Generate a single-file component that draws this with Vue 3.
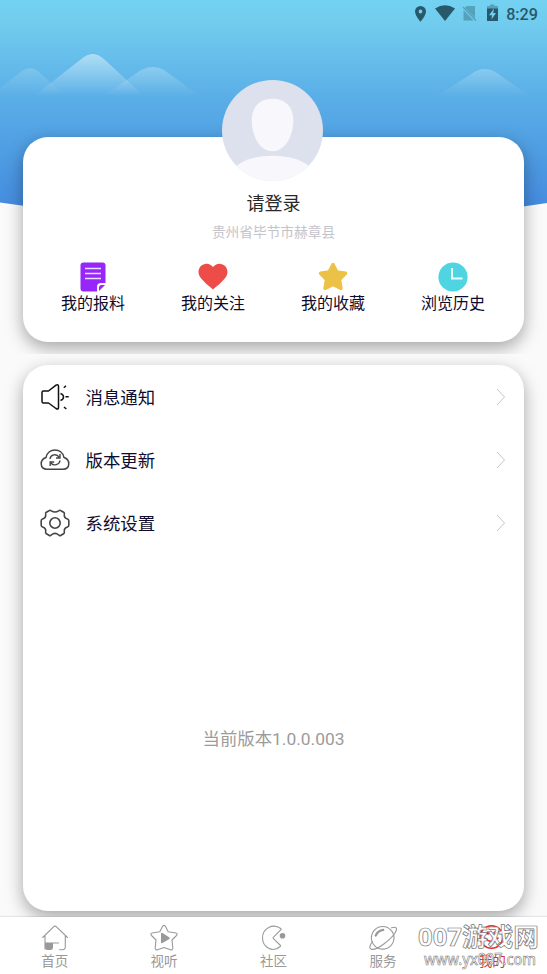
<script setup>
const actions = [
  { label: '我的报料', icon: 'note' },
  { label: '我的关注', icon: 'heart' },
  { label: '我的收藏', icon: 'star' },
  { label: '浏览历史', icon: 'clock' },
]
const settings = [
  { label: '消息通知', icon: 'speaker' },
  { label: '版本更新', icon: 'cloud' },
  { label: '系统设置', icon: 'gear' },
]
const tabs = [
  { label: '首页', icon: 'home' },
  { label: '视听', icon: 'media' },
  { label: '社区', icon: 'community' },
  { label: '服务', icon: 'planet' },
  { label: '我的', icon: 'user', active: true },
]
</script>

<template>
  <div class="page">
    <svg class="backdrop" viewBox="0 0 547 216" preserveAspectRatio="none">
      <defs>
        <linearGradient id="sky" x1="0" y1="0" x2="0" y2="1">
          <stop offset="0" stop-color="#73d2f1" />
          <stop offset=".1" stop-color="#71ccee" />
          <stop offset=".44" stop-color="#5aaee7" />
          <stop offset=".65" stop-color="#509fe3" />
          <stop offset="1" stop-color="#4286de" />
        </linearGradient>
        <linearGradient id="peak" gradientUnits="userSpaceOnUse" x1="0" y1="54" x2="0" y2="96">
          <stop offset="0" stop-color="#fff" stop-opacity=".47" />
          <stop offset="1" stop-color="#fff" stop-opacity="0" />
        </linearGradient>
        <linearGradient id="hill" gradientUnits="userSpaceOnUse" x1="0" y1="67" x2="0" y2="96">
          <stop offset="0" stop-color="#fff" stop-opacity=".26" />
          <stop offset="1" stop-color="#fff" stop-opacity="0" />
        </linearGradient>
      </defs>
      <path d="M0 0H547V203Q273.500 245 0 202.500Z" fill="url(#sky)" />
      <path d="M0 88L22 71Q30 65 38 71L66 96H0Z" fill="url(#hill)" opacity=".65" />
      <path d="M33 97L80 60Q93 48 105 60L145 97Z" fill="url(#peak)" />
      <path d="M103 96L141 70Q153 64 164 70L200 96Z" fill="url(#hill)" />
      <path d="M435 97L476 71Q484 67 494 71L531 97Z" fill="url(#hill)" />
    </svg>

    <header class="status">
      <svg width="120" height="28" viewBox="412 0 120 28" class="status-icons">
        <path fill-rule="evenodd" d="M420.500 6a5.500 5.500 0 0 0-5.500 5.500c0 4 5.500 10.300 5.500 10.300s5.500-6.300 5.500-10.300A5.500 5.500 0 0 0 420.500 6Zm0 3.600a1.900 1.900 0 1 1 0 3.800a1.900 1.900 0 0 1 0-3.800Z" />
        <path d="M435 8.600Q445 2 455 8.600L445 21Z" />
        <path opacity=".38" d="M467 6H475V18L465 7.800ZM463.500 10L473.500 20.500H463.500ZM462.500 7.500L463.500 6.500L476.500 20L475.500 21Z" />
        <path opacity=".4" d="M487 7V6H490V4.500H494.500V6H498V9H487Z" />
        <path fill-rule="evenodd" d="M487 8.500H498V21H487ZM494 8.500L489 15.300H492L491.500 19.500L496 13H493.200Z" />
      </svg>
      <span class="time">8:29</span>
    </header>

    <section class="profile-wrap">
      <div class="card profile">
        <svg class="avatar" viewBox="0 0 102 102">
          <defs><clipPath id="face"><circle cx="51" cy="51" r="51" /></clipPath></defs>
          <g clip-path="url(#face)">
            <rect width="102" height="102" fill="#dde1ed" />
            <path d="M51 19C38 19 30 27 30 41C30 56 38 72 51 72S72 56 72 41C72 27 64 19 51 19Z" fill="#f8f8fc" />
            <path d="M10 91Q23 76.500 51 76.500T92 91V103H10Z" fill="#f8f8fc" />
          </g>
        </svg>
        <h1>请登录</h1>
        <p class="region">贵州省毕节市赫章县</p>
        <nav class="actions">
          <a v-for="item in actions" :key="item.label" class="action">
            <svg width="30" height="30" viewBox="0 0 30 30">
              <g v-if="item.icon === 'note'">
                <path d="M5.500 .5H24.500Q27.500 .5 27.500 3.500V21H23Q19 21 19 25V29.500H5.500Q2.500 29.500 2.500 26.500V3.500Q2.500 .5 5.500 .5Z" fill="#9626f9" />
                <path d="M21 29V25.500Q21 23 23.500 23H27Z" fill="#9626f9" />
                <path d="M7 6.500H23M7 11.500H23M7 16.500H23" stroke="#f1dfff" stroke-width="1.300" />
              </g>
              <path v-else-if="item.icon === 'heart'" d="M15 27.500C11 24 4 18.500 1.500 14C-1 9 1.500 3 7 2C10.500 1.300 13 3 15 5C17 3 19.500 1.300 23 2C28.500 3 31 9 28.500 14C26 18.500 19 24 15 27.500Z" fill="#ee4c49" />
              <path v-else-if="item.icon === 'star'" d="M15 2.500L19 10L27.500 11.300L21.500 17.600L23 26.500L15 22.500L7 26.500L8.500 17.600L2.500 11.300L11 10Z" fill="#ecc147" stroke="#ecc147" stroke-width="3.400" stroke-linejoin="round" />
              <g v-else>
                <circle cx="15" cy="15" r="14.600" fill="#4fd5e1" />
                <path d="M14 6V16.500H24.500" fill="none" stroke="#e9fdff" stroke-width="2" />
              </g>
            </svg>
            <span>{{ item.label }}</span>
          </a>
        </nav>
      </div>
    </section>

    <main class="settings-wrap">
      <div class="card settings">
        <div v-for="item in settings" :key="item.label" class="row">
          <svg class="row-icon" width="30" height="30" viewBox="0 0 30 30">
            <g v-if="item.icon === 'speaker'" stroke="#111" stroke-width="1.500" stroke-linejoin="round">
              <path d="M3.500 9H8.500L16 3.200Q18.500 1.800 18.500 4.500V25.500Q18.500 28 16 26.500L8.500 21H3.500Q2 21 2 19.500V10.500Q2 9 3.500 9Z" />
              <path d="M20.500 11.500Q23.500 12.500 23.500 15T20.500 18.500M25.500 14.700H28.700M23.800 5.700L26 3.800M24 25L26.300 27" />
            </g>
            <g v-else-if="item.icon === 'cloud'" stroke="#444" stroke-width="1.500">
              <path d="M7 24.200C-.5 24.200-.5 14.500 6 12.500C8 2.500 22 2.500 24 12.500C30.500 14.500 30.500 24.200 23 24.200Z" />
              <path d="M10 14C10.500 9.500 16.500 8.300 19 12M20 9V13H16M20 15.500C19.500 20 13.500 21.300 11 18M10.200 21V17H14.200" stroke-width="1.400" />
            </g>
            <g v-else stroke="#444" stroke-width="1.600" stroke-linejoin="round">
              <path d="M9 2.700Q10.200 1.800 11.300 2.800Q15 5.200 18.700 2.800Q19.800 1.800 21 2.700L23.600 4.200Q24.800 5 24.300 6.400Q23.800 9.900 27.500 11Q28.800 11.400 28.800 12.700V17.300Q28.800 18.600 27.500 19Q23.800 20.100 24.300 23.600Q24.800 25 23.600 25.800L21 27.300Q19.800 28.200 18.700 27Q15 23.800 11.300 27Q10.200 28.200 9 27.300L6.400 25.800Q5.200 25 5.700 23.600Q6.200 20.100 2.500 19Q1.200 18.600 1.200 17.300V12.700Q1.200 11.400 2.500 11Q6.200 9.900 5.700 6.400Q5.200 5 6.400 4.200Z" />
              <circle cx="15" cy="15" r="5.200" />
            </g>
          </svg>
          <span class="row-label">{{ item.label }}</span>
          <svg class="chevron" width="10" height="18" viewBox="0 0 10 18"><path d="M1 1L8.500 9L1 17" /></svg>
        </div>
        <p class="version">当前版本1.0.0.003</p>
      </div>
    </main>

    <footer class="tabs">
      <a v-for="tab in tabs" :key="tab.label" class="tab" :class="{ active: tab.active }">
        <svg width="28" height="28" viewBox="0 0 28 28">
          <g v-if="tab.icon === 'home'">
            <path d="M1.700 13.500L12.500 2.800Q14 1.300 15.500 2.800L26.500 13.500M4 11.500V25M24.300 12V22.500Q24.300 25.700 21.500 25.700H18.500M4 19H17.500" />
            <path d="M4 19H12V23Q12 26 9.500 26H6.500Q4 26 4 23Z" fill="currentColor" stroke="none" />
          </g>
          <g v-else-if="tab.icon === 'media'">
            <path d="M12.600 2.300Q14 .5 15.400 2.300L18.200 7.800L25.800 9Q28 9.700 26.500 11.500L22 16L22.800 23.800Q22.800 26.500 20.500 25.700L14 23.500L7.500 25.700Q5.200 26.500 5.200 23.800L6 16L1.500 11.500Q0 9.700 2.200 9L9.800 7.800Z" />
            <path d="M11 9.500Q11 8.500 12.500 9L19.500 13.500Q20 14.500 19.300 15L12.500 19Q11 19.500 11 18.500Z" fill="currentColor" stroke="none" />
          </g>
          <g v-else-if="tab.icon === 'community'">
            <path d="M20.700 4.500C13 -1 2.500 4 2.500 13.800S13 29 20.200 22.500Q21 21.700 20 21L13.500 14.700Q12.700 14 13.500 13.200L20.500 6.200Q21.500 5.300 20.700 4.500Z" />
            <circle cx="22.500" cy="11.700" r="2.800" fill="currentColor" stroke="none" />
          </g>
          <g v-else-if="tab.icon === 'planet'">
            <circle cx="13.700" cy="13.800" r="11.300" />
            <path d="M22.500 3.800C27 2.300 29 3.700 26.300 8.500C22.500 15 7.500 27 2.200 25.200C-.5 24.200 1.200 20.500 3.500 17.500" />
            <path d="M6.700 11.500Q9 6.500 14.200 5.800" stroke-width="2.300" />
          </g>
          <g v-else>
            <circle cx="13.500" cy="13" r="11.300" />
            <path d="M7 14Q13.500 21 20 14" />
            <circle cx="10" cy="9" r="1.800" fill="currentColor" stroke="none" />
            <circle cx="17" cy="9" r="1.800" fill="currentColor" stroke="none" />
          </g>
        </svg>
        <span>{{ tab.label }}</span>
      </a>
    </footer>

    <svg class="watermark" width="134" height="60" viewBox="413 914 134 60">
      <text x="418" y="945.500" class="mark-title" textLength="121" lengthAdjust="spacingAndGlyphs">007游戏网</text>
      <text x="424" y="965" class="mark-url" textLength="112" lengthAdjust="spacingAndGlyphs">www.yx007.com</text>
    </svg>
  </div>
</template>

<style>
body { background: #fafafa; }
</style>

<style scoped>
.page {
  position: relative;
  display: flex;
  flex-direction: column;
  width: 547px;
  height: 974px;
  overflow: hidden;
  background: #fafafa;
  font-family: Roboto, "Noto Sans CJK SC", sans-serif;
}
h1, p { margin: 0; font-weight: 400; }
.backdrop { position: absolute; top: 0; left: 0; width: 547px; height: 216px; }
.status { position: relative; display: flex; height: 28px; padding-right: 9px; justify-content: flex-end; align-items: center; color: #28596a; flex: none; }
.status-icons { margin-right: -26px; fill: currentColor; }
.time { font-size: 16.200px; font-weight: 500; line-height: 28px; padding-top: 1px; }
.profile-wrap { position: relative; height: 326px; flex: none; box-sizing: border-box; padding: 109px 23px 12px; overflow: hidden; }
.card { box-sizing: border-box; background: #fff; border-radius: 25px; box-shadow: 0 6px 17px rgba(0, 0, 0, .34); }
.profile { position: relative; height: 205px; display: flex; flex-direction: column; align-items: center; padding-top: 54px; }
.avatar { position: absolute; top: -57px; left: 199px; width: 101px; height: 101px; }
.profile h1 { font-size: 18px; line-height: 26px; color: #292929; }
.region { font-size: 13.700px; line-height: 20px; margin-top: 5px; color: #c3c3ca; }
.actions { display: flex; width: 480px; margin-top: 20px; margin-right: 1px; }
.action { flex: 1; display: flex; flex-direction: column; align-items: center; color: #0e0b2d; font-size: 16px; line-height: 22px; }
.action svg { margin-bottom: 1px; }
.settings-wrap { position: relative; flex: 1; padding: 11px 23px 6px; overflow: hidden; }
.settings { height: 546px; }
.row { display: flex; align-items: center; height: 63px; padding: 0 18px 0 16.500px; color: #0e0b2d; }
.row-icon { fill: none; margin-right: 16px; }
.row-label { flex: 1; font-size: 17.400px; line-height: 26px; padding-top: 2px; }
.chevron { fill: none; stroke: #c6c6ca; stroke-width: 1; }
.version { margin-top: 172px; text-align: center; font-size: 17.400px; line-height: 26px; color: #9b9b9b; }
.tabs { position: relative; display: flex; height: 57px; flex: none; background: #fff; box-shadow: 0 -1px 1px rgba(0, 0, 0, .08); }
.tab { flex: 1; display: flex; flex-direction: column; align-items: center; padding-top: 7px; color: #999; font-size: 13.500px; line-height: 18px; }
.tab svg { fill: none; stroke: currentColor; stroke-width: 1.100; stroke-linecap: round; stroke-linejoin: round; }
.tab.active { color: #df3030; }
.tab.active svg { stroke-width: 1.600; }
.watermark { position: absolute; right: 0; bottom: 0; }
.mark-title { font-size: 25px; font-family: "Noto Sans", "Noto Sans CJK SC", sans-serif; font-weight: 700; fill: #fff; fill-opacity: .85; stroke: #777; stroke-width: .7px; stroke-linejoin: round; }
.mark-url { font-size: 16px; font-family: "Noto Sans", sans-serif; font-weight: 500; fill: #fff; fill-opacity: .7; stroke: #777; stroke-width: .6px; }
</style>
